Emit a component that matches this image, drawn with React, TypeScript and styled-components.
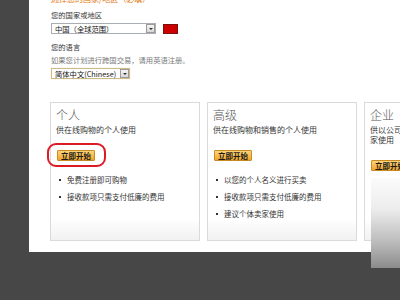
import React from "react";
import styled, { createGlobalStyle } from "styled-components";

const Global = createGlobalStyle`
  html, body { margin: 0; padding: 0; background: #474747; }
  body { font-family: "Noto Sans CJK SC", "Liberation Sans", sans-serif; }
`;

const Page = styled.div`
  width: 400px;
  height: 300px;
  overflow: hidden;
  position: relative;
  background: #474747;
`;

const Panel = styled.div`
  margin-left: 29px;
  width: 371px;
  height: 252px;
  background: #fff;
  padding-left: 22px;
  box-sizing: border-box;
  overflow: hidden;
  display: flex;
  flex-direction: column;
  align-items: flex-start;
`;

const Heading = styled.div`
  margin-top: -6px;
  font-size: 8px;
  line-height: 10px;
  color: #e47911;
  white-space: nowrap;
`;

const Label = styled.div<{ $top: number; $muted?: boolean }>`
  margin-top: ${(p) => p.$top}px;
  font-size: 7.3px;
  line-height: 10px;
  color: ${(p) => (p.$muted ? "#7a7a7a" : "#333")};
  white-space: nowrap;
`;

const SelectRow = styled.div<{ $top: number }>`
  margin-top: ${(p) => p.$top}px;
  display: flex;
  align-items: center;
  gap: 7px;
`;

const Select = styled.div<{ $w: number; $warm?: boolean }>`
  width: ${(p) => p.$w}px;
  height: 11px;
  box-sizing: border-box;
  border: 1px solid ${(p) => (p.$warm ? "#cdb98a" : "#a9aeb4")};
  box-shadow: ${(p) => (p.$warm ? "0 0 1px #e8d9a8" : "none")};
  background: #fff;
  display: flex;
  align-items: center;
  justify-content: space-between;
  padding-left: 3px;
  font-size: 7.3px;
  color: #111;
  white-space: nowrap;
`;

const DropBtn = styled.span`
  width: 9px;
  height: 9px;
  box-sizing: border-box;
  border: 1px solid #9a9a9a;
  background: linear-gradient(#f4f4f4, #d8d8d8);
  display: flex;
  align-items: center;
  justify-content: center;
  &::after {
    content: "";
    border-left: 2px solid transparent;
    border-right: 2px solid transparent;
    border-top: 2px solid #333;
  }
`;

const Flag = styled.span`
  width: 13px;
  height: 8px;
  background: #cc0000;
  border: 1px solid #7a1010;
`;

const Cards = styled.div`
  margin-top: 23px;
  display: flex;
  gap: 7px;
  margin-left: -1px;
`;

const Card = styled.div`
  flex: 0 0 148px;
  height: 139px;
  box-sizing: border-box;
  border: 1px solid #dadada;
  background: linear-gradient(to bottom, #fff 0, #fff 116px, #f1f1f1 100%);
  padding: 5px 6px 0 5px;
  display: flex;
  flex-direction: column;
  align-items: flex-start;
`;

const Title = styled.div`
  font-size: 12px;
  line-height: 14px;
  color: #555;
  font-weight: 300;
`;

const Desc = styled.div`
  margin-top: 3px;
  font-size: 8px;
  line-height: 10px;
  color: #333;
  width: 137px;
  white-space: normal;
  word-break: break-all;
`;

const BtnWrap = styled.div`
  position: relative;
  margin-top: 15px;
  margin-left: 1px;
`;

const StartBtn = styled.div`
  width: 38px;
  height: 11px;
  box-sizing: border-box;
  border: 1px solid #c98c22;
  border-radius: 1px;
  background: linear-gradient(#fcd57c, #f0a52c);
  font-size: 7.5px;
  line-height: 9px;
  text-align: center;
  color: #1a1a1a;
  font-weight: 700;
`;

const Circle = styled.div`
  position: absolute;
  left: -10px;
  top: -7px;
  width: 59px;
  height: 24px;
  box-sizing: border-box;
  border: 2.5px solid #dc1c24;
  border-radius: 9px;
`;

const List = styled.ul`
  margin: 14px 0 0 0;
  padding: 0;
  list-style: none;
  display: flex;
  flex-direction: column;
  gap: 7px;
`;

const Item = styled.li`
  position: relative;
  padding-left: 11px;
  margin-left: 0;
  font-size: 7.5px;
  line-height: 10px;
  color: #333;
  white-space: nowrap;
  &::before {
    content: "";
    position: absolute;
    left: 3px;
    top: 4px;
    width: 2px;
    height: 2px;
    background: #333;
  }
`;

const Shade = styled.div`
  position: absolute;
  left: 371px;
  top: 178px;
  width: 29px;
  height: 90px;
  background: linear-gradient(#fbfbfb 0%, #ececec 35%, #bdbdbd 70%, #8c8c8c 100%);
`;

type CardData = {
  title: string;
  desc: string;
  items: string[];
  circled?: boolean;
};

const cards: CardData[] = [
  {
    title: "个人",
    desc: "供在线购物的个人使用",
    items: ["免费注册即可购物", "接收款项只需支付低廉的费用"],
    circled: true,
  },
  {
    title: "高级",
    desc: "供在线购物和销售的个人使用",
    items: ["以您的个人名义进行买卖", "接收款项只需支付低廉的费用", "建议个体卖家使用"],
  },
  {
    title: "企业",
    desc: "供以公司或企业名义进行在线销售的商家使用",
    items: ["以公司名义进行买卖", "接收款项只需支付低廉的费用", "建议企业商家使用"],
  },
];

export default function App() {
  return (
    <>
      <Global />
      <Page>
        <Panel>
          <Heading>选择您的国家/地区（必填）</Heading>
          <Label $top={6}>您的国家或地区</Label>
          <SelectRow $top={3}>
            <Select $w={105}>
              中国（全球范围）
              <DropBtn />
            </Select>
            <Flag />
          </SelectRow>
          <Label $top={8}>您的语言</Label>
          <Label $top={3} $muted>
            如果您计划进行跨国交易，请用英语注册。
          </Label>
          <SelectRow $top={3}>
            <Select $w={79} $warm>
              简体中文(Chinese)
              <DropBtn />
            </Select>
          </SelectRow>
          <Cards>
            {cards.map((c) => (
              <Card key={c.title}>
                <Title>{c.title}</Title>
                <Desc>{c.desc}</Desc>
                <BtnWrap>
                  <StartBtn>立即开始</StartBtn>
                  {c.circled && <Circle />}
                </BtnWrap>
                <List>
                  {c.items.map((it) => (
                    <Item key={it}>{it}</Item>
                  ))}
                </List>
              </Card>
            ))}
          </Cards>
        </Panel>
        <Shade />
      </Page>
    </>
  );
}
